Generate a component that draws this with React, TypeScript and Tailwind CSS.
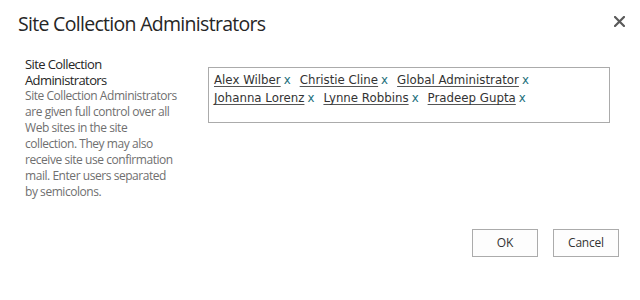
import React from "react";

const users = [
  ["Alex Wilber", "Christie Cline", "Global Administrator"],
  ["Johanna Lorenz", "Lynne Robbins", "Pradeep Gupta"],
];

export default function App() {
  return (
    <div className="w-[640px] h-[300px] bg-white relative overflow-hidden" style={{ fontFamily: '"Open Sans", "Noto Sans", sans-serif' }}>
      <div className="flex items-start justify-between pl-[18px] pr-[14px] pt-[10px] h-[38px]">
        <h1 className="text-[19.5px] leading-[28px] text-[#262626] font-normal tracking-[-0.7px]">Site Collection Administrators</h1>
        <button className="mt-[4px] w-[14px] h-[14px] flex items-center justify-center" aria-label="Close">
          <svg width="11" height="11" viewBox="0 0 11 11">
            <path d="M1 1L10 10M10 1L1 10" stroke="#5a5a5a" strokeWidth="2.2" strokeLinecap="square" />
          </svg>
        </button>
      </div>
      <div className="flex items-start pl-[25px] pt-[18px]">
        <div className="w-[158px] shrink-0">
          <div className="text-[13px] leading-[16px] text-[#262626] tracking-[-0.6px]">Site Collection Administrators</div>
          <div className="w-[153px] text-[12px] leading-[16px] text-[#6f6f6f] tracking-[-0.45px]">
            Site Collection Administrators are given full control over all Web sites in the site collection. They may also receive site use confirmation mail. Enter users separated by semicolons.
          </div>
        </div>
        <div className="ml-[25px] mt-[11px] w-[402px] h-[56px] border border-[#ababab] px-[5px] pt-[3px]" style={{ fontFamily: '"DejaVu Sans", Verdana, sans-serif' }}>
          {users.map((row, i) => (
            <div key={i} className="flex text-[11.8px] leading-[18px]">
              {row.map((u) => (
                <span key={u} className="mr-[9px] whitespace-nowrap">
                  <span className="text-[#333333] underline underline-offset-[2px] decoration-[#555]">{u}</span>
                  <span className="text-[#1b6e7a] ml-[3px]">x</span>
                </span>
              ))}
            </div>
          ))}
        </div>
      </div>
      <div className="absolute left-0 right-0 top-[229px] flex justify-end gap-[15px] pr-[21px]">
        <button className="w-[66px] h-[28px] border border-[#ababab] bg-[#fdfdfd] text-[12px] text-[#333] tracking-[-0.2px]">OK</button>
        <button className="w-[66px] h-[28px] border border-[#ababab] bg-[#fdfdfd] text-[12px] text-[#333] tracking-[-0.2px]">Cancel</button>
      </div>
    </div>
  );
}
